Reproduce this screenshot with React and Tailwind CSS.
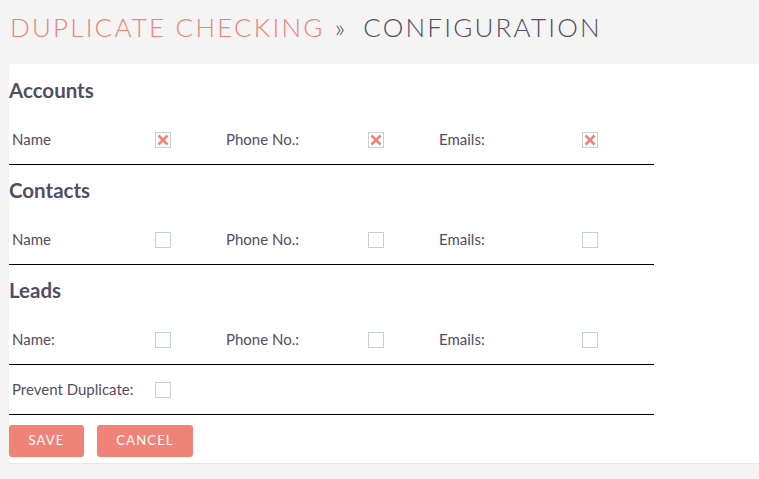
import React from "react";

const TEXT = "text-[#534d64]";

function Check({ checked }) {
  return (
    <span className="inline-flex h-[16px] w-[16px] items-center justify-center border border-[#c8d0d8] bg-white">
      {checked && (
        <svg width="14" height="14" viewBox="0 0 14 14">
          <path d="M2.5 2.5L11.5 11.5M11.5 2.5L2.5 11.5" stroke="#f08377" strokeWidth="2.6" strokeLinecap="butt" />
        </svg>
      )}
    </span>
  );
}

function Row({ labels, checked }) {
  return (
    <div className="grid h-[50px] grid-cols-[146px_68px_145px_68px_146px_72px] items-center border-b border-black">
      {labels.map((l, i) => (
        <React.Fragment key={i}>
          <div className={`pl-[3px] text-[15px] ${TEXT}`}>{l}</div>
          <div className="flex items-center">
            <Check checked={checked} />
          </div>
        </React.Fragment>
      ))}
    </div>
  );
}

function Section({ title, labels, checked }) {
  return (
    <div>
      <div className={`flex h-[50px] items-center text-[20.5px] font-bold ${TEXT}`}>{title}</div>
      <Row labels={labels} checked={checked} />
    </div>
  );
}

export default function App() {
  return (
    <div className="h-[479px] w-[759px] overflow-hidden bg-[#f4f4f4]" style={{ fontFamily: "Lato, 'Open Sans', sans-serif" }}>
      <div className="flex h-[64px] items-start pl-[10px] pt-[14px] text-[26px] font-light tracking-[2.2px] leading-none">
        <span className="text-[#f08377]">DUPLICATE CHECKING</span>
        <span className={`ml-[10px] ${TEXT}`}>»</span>
        <span className={`ml-[16px] ${TEXT}`}>CONFIGURATION</span>
      </div>
      <div className="ml-[9px] rounded-tl-[4px] border-b border-[#e6e6e6] bg-white pb-[6px] pt-[1px]">
        <div className="w-[645px]">
          <Section title="Accounts" labels={["Name", "Phone No.:", "Emails:"]} checked />
          <Section title="Contacts" labels={["Name", "Phone No.:", "Emails:"]} />
          <Section title="Leads" labels={["Name:", "Phone No.:", "Emails:"]} />
          <div className="grid h-[50px] grid-cols-[146px_68px] items-center border-b border-black">
            <div className={`pl-[3px] text-[15px] ${TEXT}`}>Prevent Duplicate:</div>
            <div className="flex items-center">
              <Check />
            </div>
          </div>
          <div className="mt-[10px] flex gap-[13px]">
            <button className="h-[32px] w-[75px] rounded-[3px] bg-[#f08377] text-[13px] tracking-[1.2px] text-white">SAVE</button>
            <button className="h-[32px] w-[96px] rounded-[3px] bg-[#f08377] text-[13px] tracking-[1.2px] text-white">CANCEL</button>
          </div>
        </div>
      </div>
    </div>
  );
}
